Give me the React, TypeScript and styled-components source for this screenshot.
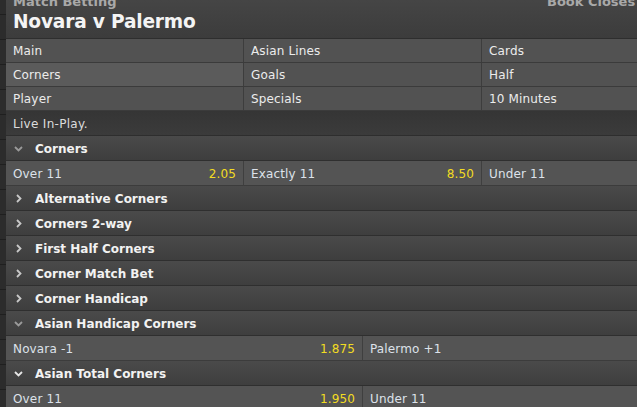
import React from "react";
import styled, { createGlobalStyle } from "styled-components";

const GlobalStyle = createGlobalStyle`
  html, body { margin: 0; padding: 0; background: #2b2b2b; overflow: hidden; }
  body { font-family: "DejaVu Sans", Verdana, sans-serif; }
`;

const Page = styled.div`
  display: flex;
  width: 720px;
  margin-top: -8px;
`;

const LeftStrip = styled.div`
  width: 6px;
  flex: none;
  background: repeating-linear-gradient(
    to bottom,
    #2c2c2c 0px,
    #2c2c2c 24px,
    #1f1f1f 24px,
    #1f1f1f 25px
  );
  background-position: 0 -2px;
`;

const Main = styled.div`
  width: 714px;
  flex: none;
  display: flex;
  flex-direction: column;
`;

const Header = styled.div`
  display: flex;
  align-items: flex-start;
  padding: 0 7px;
  background: linear-gradient(#474747, #3c3c3c);
  border-bottom: 1px solid #2e2e2e;
  box-sizing: border-box;
  height: 47px;
`;

const TitleBlock = styled.div`
  flex: 1;
  display: flex;
  flex-direction: column;
`;

const Kicker = styled.div`
  font-weight: bold;
  font-size: 13px;
  color: #a9a9a9;
  line-height: 15px;
  padding-top: 2px;
`;

const Title = styled.div`
  font-weight: bold;
  font-size: 18.6px;
  color: #f4f4f4;
  line-height: 26px;
  letter-spacing: -0.2px;
`;

const BookCloses = styled.div`
  width: 166px;
  font-weight: bold;
  font-size: 13px;
  color: #a9a9a9;
  line-height: 15px;
  padding-top: 2px;
  white-space: nowrap;
`;

const Grid = styled.div<{ $cols: number }>`
  display: grid;
  grid-template-columns: repeat(${(p) => p.$cols}, 1fr);
`;

const TabCell = styled.div<{ $active?: boolean }>`
  height: 24px;
  box-sizing: border-box;
  padding: 1px 7px 0;
  display: flex;
  align-items: center;
  font-size: 12px;
  letter-spacing: 0.15px;
  color: #ececec;
  background: ${(p) => (p.$active ? "#5b5b5b" : "#525252")};
  border-bottom: 1px solid #3b3b3b;
  border-right: 1px solid #3d3d3d;
`;

const InfoRow = styled.div`
  height: 25px;
  box-sizing: border-box;
  padding: 1px 7px 0;
  display: flex;
  align-items: center;
  font-size: 12px;
  letter-spacing: 0.3px;
  color: #dcdcdc;
  background: linear-gradient(#353535, #3b3b3b);
  border-bottom: 1px solid #2e2e2e;
`;

const SectionHeader = styled.div`
  height: 25px;
  box-sizing: border-box;
  padding: 1px 0 0 8px;
  display: flex;
  align-items: center;
  gap: 12px;
  font-size: 12px;
  font-weight: bold;
  color: #f2f2f2;
  background: linear-gradient(#4a4a4a, #3e3e3e);
  border-bottom: 1px solid #2f2f2f;
`;

const Chevron = styled.svg<{ $tone: string }>`
  width: 9px;
  height: 9px;
  flex: none;
  stroke: ${(p) => p.$tone};
  fill: none;
  stroke-width: 1.8;
`;

const OddsCell = styled.div`
  height: 25px;
  box-sizing: border-box;
  padding: 1px 7px 0;
  display: flex;
  align-items: center;
  justify-content: space-between;
  font-size: 12px;
  letter-spacing: 0.15px;
  background: #545454;
  border-bottom: 1px solid #3c3c3c;
  border-right: 1px solid #3f3f3f;
`;

const Label = styled.span`
  color: #dde2ea;
`;

const Price = styled.span`
  color: #f2dc22;
`;

type Sel = { label: string; price?: string };
type Section = { title: string; open: boolean; tone?: string; cols?: number; sels?: Sel[] };

const sections: Section[] = [
  {
    title: "Corners",
    open: true,
    tone: "#9a9a9a",
    cols: 3,
    sels: [
      { label: "Over 11", price: "2.05" },
      { label: "Exactly 11", price: "8.50" },
      { label: "Under 11", price: "2.10" },
    ],
  },
  { title: "Alternative Corners", open: false },
  { title: "Corners 2-way", open: false },
  { title: "First Half Corners", open: false },
  { title: "Corner Match Bet", open: false },
  { title: "Corner Handicap", open: false },
  {
    title: "Asian Handicap Corners",
    open: true,
    tone: "#9a9a9a",
    cols: 2,
    sels: [
      { label: "Novara -1", price: "1.875" },
      { label: "Palermo +1", price: "1.925" },
    ],
  },
  {
    title: "Asian Total Corners",
    open: true,
    tone: "#e6e6e6",
    cols: 2,
    sels: [
      { label: "Over 11", price: "1.950" },
      { label: "Under 11", price: "1.850" },
    ],
  },
];

const tabs = [
  "Main", "Asian Lines", "Cards",
  "Corners", "Goals", "Half",
  "Player", "Specials", "10 Minutes",
];

function ChevronIcon({ open, tone }: { open: boolean; tone: string }) {
  return (
    <Chevron $tone={tone} viewBox="0 0 9 9">
      {open ? <path d="M1 3l3.5 3.5L8 3" /> : <path d="M3 1l3.5 3.5L3 8" />}
    </Chevron>
  );
}

export default function App() {
  return (
    <>
      <GlobalStyle />
      <Page>
        <LeftStrip />
        <Main>
          <Header>
            <TitleBlock>
              <Kicker>Match Betting</Kicker>
              <Title>Novara v Palermo</Title>
            </TitleBlock>
            <BookCloses>Book Closes 20:45</BookCloses>
          </Header>
          <Grid $cols={3}>
            {tabs.map((t) => (
              <TabCell key={t} $active={t === "Corners"}>
                {t}
              </TabCell>
            ))}
          </Grid>
          <InfoRow>Live In-Play.</InfoRow>
          {sections.map((s) => (
            <React.Fragment key={s.title}>
              <SectionHeader>
                <ChevronIcon open={s.open} tone={s.tone ?? "#c8c8c8"} />
                {s.title}
              </SectionHeader>
              {s.sels && (
                <Grid $cols={s.cols ?? 2}>
                  {s.sels.map((sel) => (
                    <OddsCell key={sel.label}>
                      <Label>{sel.label}</Label>
                      <Price>{sel.price}</Price>
                    </OddsCell>
                  ))}
                </Grid>
              )}
            </React.Fragment>
          ))}
        </Main>
      </Page>
    </>
  );
}
